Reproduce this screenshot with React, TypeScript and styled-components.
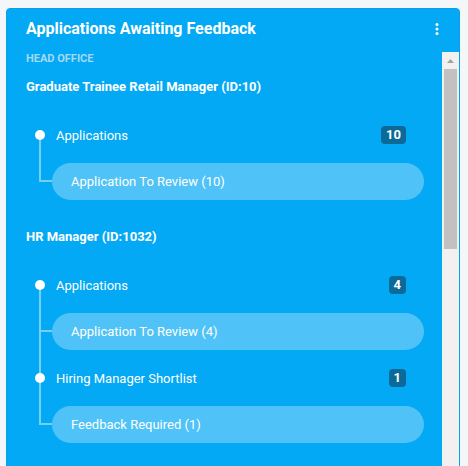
import React from 'react';
import styled, { createGlobalStyle } from 'styled-components';

const GlobalStyle = createGlobalStyle`
  html, body {
    margin: 0;
    padding: 0;
    background: #f4f7fa;
    overflow: hidden;
  }
  body {
    font-family: Roboto, "Liberation Sans", Arial, sans-serif;
  }
`;

const Page = styled.div`
  padding: 8px 8px 0 6px;
`;

const Card = styled.div`
  width: 454px;
  height: 470px;
  box-sizing: border-box;
  display: flex;
  flex-direction: column;
  background: #03a9f4;
  border: 1px solid #0a9fe6;
  border-radius: 4px;
  overflow: hidden;
`;

const Header = styled.div`
  display: flex;
  justify-content: space-between;
  align-items: center;
  padding: 10px 20px 13px 19px;
`;

const Title = styled.h2`
  margin: 0;
  font-size: 16px;
  line-height: 20px;
  font-weight: 700;
  color: #fff;
`;

const MenuButton = styled.button`
  display: flex;
  padding: 0;
  border: 0;
  background: none;
  cursor: pointer;
`;

const BodyFrame = styled.div`
  flex: 1;
  min-height: 0;
  display: flex;
`;

const Body = styled.div`
  flex: 1;
  min-width: 0;
  overflow: hidden;
  padding: 0 18px 30px 19px;
`;

/* classic scrollbar drawn beside the list */
const ScrollTrack = styled.div`
  width: 17px;
  display: flex;
  flex-direction: column;
  background: #f1f1f1;
`;

const ScrollArrow = styled.div`
  height: 17px;
  display: flex;
  align-items: center;
  justify-content: center;
`;

const ScrollThumb = styled.div<{ size: number }>`
  height: ${p => p.size}px;
  margin: 0 2px;
  background: #c1c1c1;
`;

const OfficeLabel = styled.div`
  font-size: 11px;
  line-height: 14px;
  font-weight: 700;
  color: #a4d9f3;
  text-transform: uppercase;
`;

const JobList = styled.div`
  display: flex;
  flex-direction: column;
  gap: 29px;
  margin-top: 13px;
`;

const JobTitle = styled.div`
  font-size: 13px;
  line-height: 16px;
  font-weight: 700;
  color: #fff;
`;

const Steps = styled.div`
  display: flex;
  flex-direction: column;
  gap: 10px;
  margin-top: 22px;
`;

const Step = styled.div<{ last?: boolean }>`
  position: relative;
  display: flex;
  flex-direction: column;
  gap: 10px;

  &::before {
    content: '';
    position: absolute;
    left: 13px;
    width: 2px;
    top: 18px;
    bottom: ${p => (p.last ? '18px' : '-28px')};
    background: #74d0f9;
  }
`;

const StepRow = styled.div`
  display: flex;
  align-items: center;
  height: 36px;
`;

const Dot = styled.span`
  width: 10px;
  height: 10px;
  margin-left: 9px;
  border-radius: 50%;
  background: #fff;
  position: relative;
  z-index: 1;
`;

const StepLabel = styled.span`
  flex: 1;
  margin-left: 11px;
  font-size: 13px;
  color: #fff;
`;

const Count = styled.span`
  height: 18px;
  line-height: 18px;
  padding: 0 5px;
  margin-right: 18px;
  border-radius: 4px;
  background: #0b6a98;
  font-size: 13px;
  font-weight: 700;
  color: #fff;
`;

const Action = styled.div`
  position: relative;
  margin-left: 26px;
  height: 37px;
  line-height: 37px;
  padding: 0 19px;
  border-radius: 19px;
  background: #4fc3f7;
  font-size: 13px;
  color: #fff;
  cursor: pointer;

  &::before {
    content: '';
    position: absolute;
    left: -13px;
    top: 17px;
    width: 13px;
    height: 2px;
    background: #74d0f9;
  }
`;

interface StageData {
  label: string
  count: number
  action: string
}

interface JobData {
  title: string
  stages: StageData[]
}

const jobs: JobData[] = [
  {
    title: 'Graduate Trainee Retail Manager (ID:10)',
    stages: [
      { label: 'Applications', count: 10, action: 'Application To Review (10)' },
    ],
  },
  {
    title: 'HR Manager (ID:1032)',
    stages: [
      { label: 'Applications', count: 4, action: 'Application To Review (4)' },
      { label: 'Hiring Manager Shortlist', count: 1, action: 'Feedback Required (1)' },
    ],
  },
];

const KebabIcon = () => (
  <svg width="4" height="12" viewBox="0 0 4 12" fill="#fff">
    <circle cx="2" cy="1.6" r="1.5" />
    <circle cx="2" cy="6" r="1.5" />
    <circle cx="2" cy="10.4" r="1.5" />
  </svg>
);

const ArrowUp = () => (
  <svg width="7" height="4" viewBox="0 0 7 4" fill="#a3a3a3">
    <path d="M0 4 L3.5 0 L7 4 Z" />
  </svg>
);

export default function App() {
  return (
    <Page>
      <GlobalStyle />
      <Card>
        <Header>
          <Title>Applications Awaiting Feedback</Title>
          <MenuButton aria-label="More options">
            <KebabIcon />
          </MenuButton>
        </Header>
        <BodyFrame>
          <Body>
            <OfficeLabel>Head Office</OfficeLabel>
            <JobList>
              {jobs.map(job => (
                <div key={job.title}>
                  <JobTitle>{job.title}</JobTitle>
                  <Steps>
                    {job.stages.map((stage, i) => (
                      <Step key={stage.label} last={i === job.stages.length - 1}>
                        <StepRow>
                          <Dot />
                          <StepLabel>{stage.label}</StepLabel>
                          <Count>{stage.count}</Count>
                        </StepRow>
                        <Action>{stage.action}</Action>
                      </Step>
                    ))}
                  </Steps>
                </div>
              ))}
            </JobList>
          </Body>
          <ScrollTrack>
            <ScrollArrow>
              <ArrowUp />
            </ScrollArrow>
            <ScrollThumb size={180} />
          </ScrollTrack>
        </BodyFrame>
      </Card>
    </Page>
  );
}
